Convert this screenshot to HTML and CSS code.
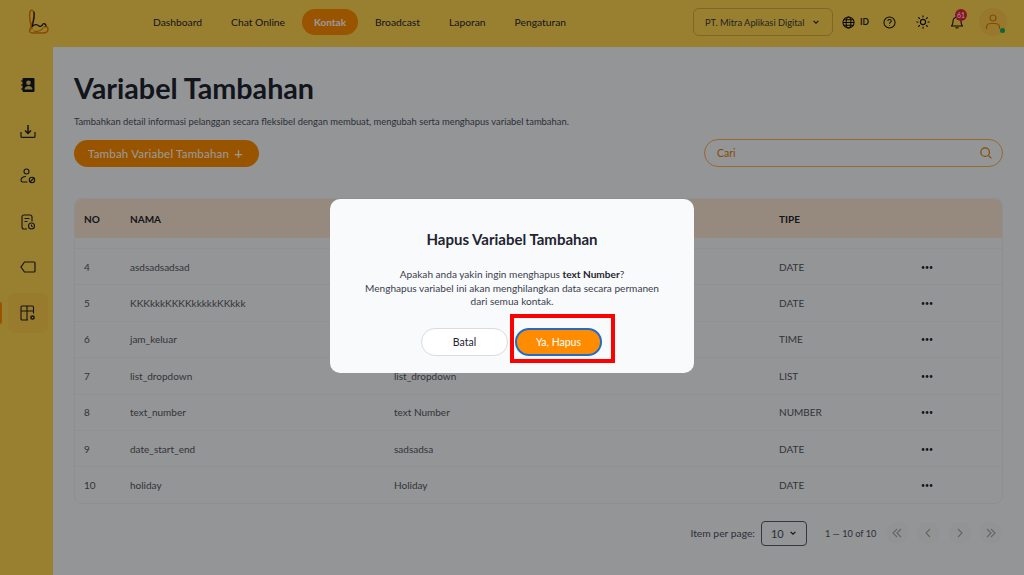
FILE: index.html
```html
<!DOCTYPE html>
<html lang="id">

<head>
  <meta charset="UTF-8">
  <title>Variabel Tambahan</title>
  <link rel="stylesheet" href="styles.css">
</head>

<body>
  <header class="topbar">
    <div class="logo">
      <svg width="22" height="26" viewBox="0 0 22 26" fill="none" stroke-linecap="round">
        <path d="M4 20C2 13 1 7 2 3c1-3 4-2 4 2 0 6-2 11-4 15-1 3 0 4 3 4h10c3 0 5-1 5-4 0-2-2-3-4-2" stroke="#e07b00" stroke-width="1.500"/>
        <path d="M6 3c1 5-1 11-2 15 2-3 5-3 7-1 1 1 3 0 4-2 1-1 3 0 3 2" stroke="#1c1a14" stroke-width="1.200"/>
        <path d="M6 22c3 1 7 0 9-3" stroke="#e07b00" stroke-width="1.200"/>
      </svg>
    </div>
    <nav class="nav">
      <a>Dashboard</a>
      <a>Chat Online</a>
      <a class="active">Kontak</a>
      <a>Broadcast</a>
      <a>Laporan</a>
      <a>Pengaturan</a>
    </nav>
    <div class="top-right">
      <div class="company">
        <span>PT. Mitra Aplikasi Digital</span>
        <svg width="8" height="8" viewBox="0 0 10 10" fill="none" stroke="#222" stroke-width="1.500"><path d="M2 3.500 5 6.500 8 3.500"/></svg>
      </div>
      <div class="lang">
        <svg width="13" height="13" viewBox="0 0 14 14" fill="none" stroke="#111" stroke-width="1.100"><circle cx="7" cy="7" r="6"/><ellipse cx="7" cy="7" rx="2.600" ry="6"/><path d="M1 7h12M1.800 4h10.400M1.800 10h10.400"/></svg>
        <b>ID</b>
      </div>
      <svg class="help" width="13" height="13" viewBox="0 0 14 14" fill="none" stroke="#111" stroke-width="1.100"><circle cx="7" cy="7" r="6"/><path d="M5.200 5.400C5.200 4.300 6 3.700 7 3.700s1.900.7 1.900 1.700c0 1.500-1.900 1.500-1.900 3"/><path d="M7 10v.6"/></svg>
      <svg class="sun" width="14" height="14" viewBox="0 0 14 14" fill="none" stroke="#111" stroke-width="1.100" stroke-linecap="round"><circle cx="7" cy="7" r="2.600"/><path d="M7 .8v1.200M7 12v1.200M.8 7H2M12 7h1.200M2.600 2.600l.9.9M10.500 10.500l.9.9M2.600 11.400l.9-.9M10.500 3.500l.9-.9"/></svg>
      <div class="bell">
        <svg width="12" height="14" viewBox="0 0 12 14" fill="none" stroke="#111" stroke-width="1.100"><path d="M.5 11h11c-1-1-1.500-2-1.500-4.500C10 4 8.500 2.200 6 2.200S2 4 2 6.500C2 9 1.500 10 .5 11Z"/><path d="M4.500 12.800h3"/></svg>
        <span class="badge">61</span>
      </div>
      <div class="avatar">
        <svg width="16" height="18" viewBox="0 0 16 18" fill="none" stroke="#d97f0a" stroke-width="1.200"><circle cx="8" cy="5" r="3"/><path d="M1.500 16v-1.500C1.500 12 3.500 10.500 6 10.500h4c2.500 0 4.500 1.500 4.500 4V16"/></svg>
        <span class="online"></span>
      </div>
    </div>
  </header>

  <div class="layout">
    <aside class="sidebar">
      <a class="side-item">
        <svg width="18" height="18" viewBox="0 0 18 18"><path d="M4.500 2h10a1 1 0 0 1 1 1v12a1 1 0 0 1-1 1h-10a1 1 0 0 1-1-1V3a1 1 0 0 1 1-1Z" fill="#111827"/><circle cx="9.500" cy="6.800" r="2.300" fill="#e0c060"/><path d="M5.500 13.500c0-2.200 1.700-3.400 4-3.400s4 1.200 4 3.400Z" fill="#e0c060"/><path d="M2 5h3M2 9h3M2 13h3" stroke="#111827" stroke-width="1.200"/></svg>
      </a>
      <a class="side-item">
        <svg width="18" height="18" viewBox="0 0 18 18" fill="none" stroke="#1f2430" stroke-width="1.200"><path d="M2 10v4.500c0 .5.300.8.800.8h12.400c.5 0 .8-.3.800-.8V10"/><path d="M9 3v8M6 8.500 9 11.500l3-3" stroke-width="1.500"/></svg>
      </a>
      <a class="side-item">
        <svg width="18" height="18" viewBox="0 0 18 18" fill="none" stroke="#1f2430" stroke-width="1.100"><circle cx="7.500" cy="4.500" r="2.500"/><path d="M7 9.500c-3 0-5 1.300-5 3.500 0 1.200.5 2 1.500 2h5"/><circle cx="13" cy="13" r="2.700"/><path d="M11 15l4-4"/></svg>
      </a>
      <a class="side-item">
        <svg width="18" height="18" viewBox="0 0 18 18" fill="none" stroke="#1f2430" stroke-width="1.100"><path d="M8 16H5a2 2 0 0 1-2-2V4a2 2 0 0 1 2-2h6a2 2 0 0 1 2 2v4.500"/><path d="M5.500 5.500h5M5.500 8.500h3"/><circle cx="12.500" cy="13" r="3"/><path d="M12.500 11.500V13l1.200.7"/></svg>
      </a>
      <a class="side-item">
        <svg width="18" height="18" viewBox="0 0 18 18" fill="none" stroke="#1f2430" stroke-width="1.200"><path d="M5.500 4H15a1 1 0 0 1 1 1v8a1 1 0 0 1-1 1H5.500L2 9Z"/></svg>
      </a>
      <a class="side-item current">
        <svg width="18" height="18" viewBox="0 0 18 18" fill="none" stroke="#1f2430" stroke-width="1.100"><path d="M9 16H3a1 1 0 0 1-1-1V3a1 1 0 0 1 1-1h10.500a1 1 0 0 1 1 1v6.500"/><path d="M2 7h12.500M8 2v14"/><circle cx="13.500" cy="13.500" r="1.600" stroke-width="1.500"/></svg>
      </a>
    </aside>

    <main class="content">
      <h1>Variabel Tambahan</h1>
      <p class="lead">Tambahkan detail informasi pelanggan secara fleksibel dengan membuat, mengubah serta menghapus variabel tambahan.</p>
      <div class="toolbar">
        <button class="add-btn">Tambah Variabel Tambahan <span>+</span></button>
        <div class="search">
          <span>Cari</span>
          <svg width="12" height="12" viewBox="0 0 14 14" fill="none" stroke="#e07b00" stroke-width="1.400"><circle cx="6" cy="6" r="5"/><path d="m9.700 9.700 3.500 3.500"/></svg>
        </div>
      </div>

      <div class="table">
        <div class="row head">
          <span>NO</span><span>NAMA</span><span></span><span>TIPE</span><span></span>
        </div>
        <div class="row"><span>4</span><span>asdsadsadsad</span><span></span><span>DATE</span><span class="dots">•••</span></div>
        <div class="row"><span>5</span><span>KKKkkkKKKKkkkkkKKkkk</span><span></span><span>DATE</span><span class="dots">•••</span></div>
        <div class="row"><span>6</span><span>jam_keluar</span><span></span><span>TIME</span><span class="dots">•••</span></div>
        <div class="row"><span>7</span><span>list_dropdown</span><span>list_dropdown</span><span>LIST</span><span class="dots">•••</span></div>
        <div class="row"><span>8</span><span>text_number</span><span>text Number</span><span>NUMBER</span><span class="dots">•••</span></div>
        <div class="row"><span>9</span><span>date_start_end</span><span>sadsadsa</span><span>DATE</span><span class="dots">•••</span></div>
        <div class="row"><span>10</span><span>holiday</span><span>Holiday</span><span>DATE</span><span class="dots">•••</span></div>
      </div>

      <div class="pager">
        <span class="per-page">Item per page:</span>
        <div class="per-select">
          <span>10</span>
          <svg width="8" height="8" viewBox="0 0 10 10" fill="none" stroke="#222" stroke-width="1.500"><path d="M2 3.500 5 6.500 8 3.500"/></svg>
        </div>
        <span class="range">1 — 10 of 10</span>
        <span class="page-btn"><svg width="10" height="10" viewBox="0 0 10 10"><path d="M5 1 1 5l4 4M9 1 5 5l4 4"/></svg></span>
        <span class="page-btn"><svg width="10" height="10" viewBox="0 0 10 10"><path d="M7 1 3 5l4 4"/></svg></span>
        <span class="page-btn"><svg width="10" height="10" viewBox="0 0 10 10"><path d="m3 1 4 4-4 4"/></svg></span>
        <span class="page-btn"><svg width="10" height="10" viewBox="0 0 10 10"><path d="m1 1 4 4-4 4M5 1l4 4-4 4"/></svg></span>
      </div>
    </main>
  </div>

  <div class="overlay">
    <div class="modal">
      <h2>Hapus Variabel Tambahan</h2>
      <p>Apakah anda yakin ingin menghapus <b>text Number</b>?<br>Menghapus variabel ini akan menghilangkan data secara permanen<br>dari semua kontak.</p>
      <div class="modal-actions">
        <button class="btn-cancel">Batal</button>
        <button class="btn-ok">Ya, Hapus</button>
      </div>
      <span class="highlight"></span>
    </div>
  </div>
</body>

</html>
```

FILE: styles.css
```css
* {
  box-sizing: border-box;
}

html,
body {
  height: 100%;
}

body {
  background: #f6f8fa;
  color: #1f2430;
  font-family: "Lato", "Noto Sans", sans-serif;
  font-size: 10px;
  margin: 0;
  overflow: hidden;
}

.topbar {
  align-items: center;
  background: #ffd550;
  display: flex;
  height: 47px;
  padding: 0 17px 3px 28px;
}

.logo {
  display: flex;
  width: 113px;
}

.nav {
  align-items: center;
  display: flex;
  gap: 5px;
}

.nav a {
  border-radius: 14px;
  font-size: 10.300px;
  line-height: 26px;
  padding: 0 12px;
}

.nav .active {
  background: #ff8c00;
  color: #fff;
  font-size: 10px;
  font-weight: 700;
}

.top-right {
  align-items: center;
  display: flex;
  margin-left: auto;
}

.company {
  align-items: center;
  border: 1px solid #d2ab3e;
  border-radius: 6px;
  color: #3a3a38;
  display: flex;
  font-size: 9.300px;
  height: 28px;
  justify-content: space-between;
  padding: 0 12px 0 11px;
  width: 140px;
}

.lang {
  align-items: center;
  display: flex;
  font-size: 8.500px;
  gap: 5px;
  margin-left: 9px;
}

.help {
  margin-left: 14px;
}

.sun {
  margin-left: 20px;
}

.bell {
  margin-left: 21px;
  position: relative;
}

.bell svg {
  display: block;
}

.badge {
  background: #e5243f;
  border-radius: 50%;
  color: #fff;
  font-size: 7px;
  height: 12px;
  left: 4px;
  line-height: 12px;
  position: absolute;
  text-align: center;
  top: -6px;
  width: 12px;
}

.avatar {
  align-items: center;
  background: #fcc84a;
  border-radius: 50%;
  display: flex;
  height: 28px;
  justify-content: center;
  margin-left: 16px;
  position: relative;
  width: 28px;
}

.online {
  background: #0fa968;
  border-radius: 50%;
  bottom: 3px;
  height: 5px;
  position: absolute;
  right: 2px;
  width: 5px;
}

.layout {
  display: flex;
  height: 528px;
}

.sidebar {
  background: #ffd550;
  display: flex;
  flex-direction: column;
  flex-shrink: 0;
  gap: 5.600px;
  padding-top: 18px;
  width: 53px;
}

.side-item {
  align-items: center;
  border-radius: 8px;
  display: flex;
  height: 40px;
  justify-content: center;
  margin-left: 8px;
  position: relative;
  width: 40px;
}

.side-item.current {
  background: #fdcd4c;
}

.side-item.current::before {
  background: #ff8c00;
  border-radius: 0 2px 2px 0;
  content: "";
  height: 22px;
  left: -8px;
  position: absolute;
  top: 9px;
  width: 2px;
}

.content {
  flex: 1;
  padding: 25px 21px 0;
}

h1 {
  font-size: 28.700px;
  font-weight: 700;
  line-height: 32px;
  margin: 0;
}

.lead {
  color: #4b5160;
  font-size: 9.400px;
  margin: 12px 0 0;
}

.toolbar {
  align-items: center;
  display: flex;
  justify-content: space-between;
  margin-top: 12px;
}

.add-btn {
  background: #ff8c00;
  border: 0;
  border-radius: 14px;
  color: #fff;
  font: 400 11.500px "Lato", sans-serif;
  height: 27px;
  letter-spacing: .2px;
  padding: 0 14px;
  text-align: left;
  white-space: nowrap;
  width: 185px;
}

.add-btn span {
  font-size: 15px;
  line-height: 12px;
  margin-left: 2px;
  vertical-align: -1px;
}

.search {
  align-items: center;
  border: 1px solid #ffae50;
  border-radius: 14px;
  color: #e07b00;
  display: flex;
  font-size: 10.500px;
  height: 28px;
  justify-content: space-between;
  padding: 0 10px 0 12px;
  width: 299px;
}

.table {
  border: 1px solid #eceef1;
  border-radius: 8px;
  margin-top: 31px;
  overflow: hidden;
}

.row {
  align-items: center;
  border-top: 1px solid #f0f1f4;
  color: #55575e;
  display: grid;
  font-size: 10px;
  grid-template-columns: 46px 264px 385px 142px 1fr;
  height: 36.400px;
  padding-left: 9px;
}

.row.head {
  background: #fbe7d3;
  border-top: 0;
  color: #1f2430;
  font-weight: 700;
  height: 39px;
  margin-bottom: 10px;
}

.dots {
  color: #1f2430;
  font-size: 7px;
  letter-spacing: 0;
}

.pager {
  align-items: center;
  color: #4b5160;
  display: flex;
  font-size: 10.300px;
  justify-content: flex-end;
  margin-top: 17px;
  padding-right: 1px;
}

.per-select {
  align-items: center;
  border: 1px solid #555a66;
  border-radius: 4px;
  display: flex;
  font-size: 11px;
  height: 25px;
  justify-content: space-between;
  margin: 0 18px 0 6px;
  padding: 0 9px;
  width: 46px;
}

.range {
  font-size: 9.200px;
}

.page-btn {
  align-items: center;
  background: #f4f5f4;
  border-radius: 50%;
  display: flex;
  height: 22px;
  justify-content: center;
  margin-left: 9.400px;
  width: 22px;
}

.page-btn svg {
  fill: none;
  stroke: #a4a7ad;
  stroke-width: 1.100;
}

.overlay {
  align-items: flex-start;
  background: rgba(0, 0, 0, .4);
  display: flex;
  inset: 0;
  justify-content: center;
  padding-top: 199px;
  position: fixed;
}

.modal {
  background: #f8fafc;
  border-radius: 10px;
  height: 174px;
  padding-top: 32px;
  position: relative;
  text-align: center;
  width: 364px;
}

.modal h2 {
  font-size: 15px;
  font-weight: 700;
  line-height: 16px;
  margin: 0;
}

.modal p {
  color: #3b404c;
  font-size: 10.100px;
  line-height: 13.500px;
  margin: 21px 0 0;
}

.modal b {
  color: #1f2430;
  font-weight: 700;
}

.modal-actions {
  display: flex;
  gap: 7px;
  justify-content: center;
  margin-top: 19px;
  padding-right: 1px;
}

.modal button {
  border-radius: 14px;
  font: 400 10.500px "Lato", sans-serif;
  height: 28px;
  width: 87px;
}

.btn-cancel {
  background: #fff;
  border: 1px solid #d8dbe0;
  color: #1f2430;
}

.btn-ok {
  background: #ff8c00;
  border: 2px solid #1c6dd0;
  color: #fff;
}

.highlight {
  border: 4px solid #f00;
  height: 49px;
  left: 180px;
  position: absolute;
  top: 115px;
  width: 105px;
}
```
